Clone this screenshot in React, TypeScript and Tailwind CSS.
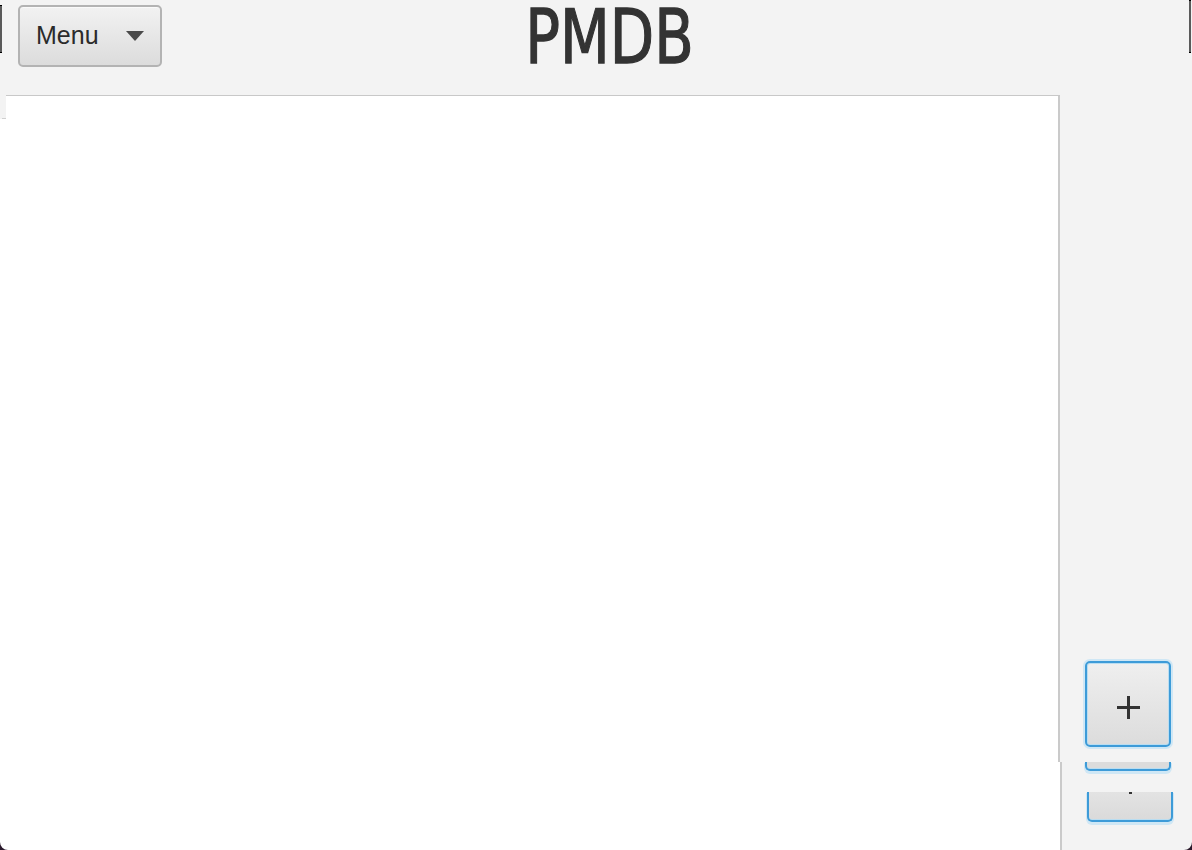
import React from "react";

function Corner({ flip }: { flip?: boolean }) {
    return (
        <svg
            width="8"
            height="8"
            viewBox="0 0 8 8"
            className={flip ? "absolute bottom-0 right-0" : "absolute bottom-0 left-0 -scale-x-100"}
        >
            <path d="M8 0 A8 8 0 0 1 0 8 L8 8 Z" fill="#2a1a2c" />
        </svg>
    );
}

export default function App() {
    return (
        <div className="relative w-[1192px] h-[850px] overflow-hidden bg-[#f3f3f3] flex flex-col font-['Liberation_Sans',Arial,sans-serif]">
            {/* header */}
            <header className="h-[95px] flex items-start shrink-0">
                <button className="mt-[5px] ml-[18px] w-[144px] h-[62px] flex items-center justify-between pl-[16px] pr-[16px] rounded-[5px] border-2 border-[#b3b3b3] bg-gradient-to-b from-[#f2f2f2] to-[#dcdcdc] shadow-[inset_0_1px_0_#fafafa] text-[25px] text-[#2b2b2b]">
                    <span>Menu</span>
                    <svg width="18" height="10" viewBox="0 0 18 10">
                        <path d="M0 0 H18 L9 10 Z" fill="#4a4a4a" />
                    </svg>
                </button>
                <h1 className="flex-1 text-center pr-[134px] leading-[75px] text-[75px] text-[#333333] font-['DejaVu_Sans',sans-serif] [-webkit-text-stroke:1.3px_#333333]">
                    <span className="inline-block scale-x-[0.77]">PMDB</span>
                </h1>
            </header>

            {/* body */}
            <div className="flex flex-1">
                <div className="w-[6px] flex flex-col">
                    <div className="h-[23px]" />
                    <div className="h-px ml-[2px] bg-[#d0d0d0]" />
                    <div className="flex-1 bg-white" />
                </div>
                <div className="w-[1054px] flex flex-col bg-white border-t border-[#c8c8c8]">
                    <div className="flex-1 border-r-2 border-[#cacaca]" />
                    <div className="h-[88px] -mr-[2px] border-r-2 border-[#cacaca]" />
                </div>
                <div className="flex-1 flex flex-col justify-end pb-[28px]">
                    <button className="ml-[25px] w-[86px] h-[86px] flex items-center justify-center pt-[7px] rounded-[5px] border-2 border-[#3d9bd8] bg-gradient-to-b from-[#efefef] to-[#dcdcdc] shadow-[0_0_0_2px_#cfe7f5,inset_0_0_0_1px_#b9ddf1]">
                        <svg width="23" height="23" viewBox="0 0 23 23">
                            <rect x="0" y="10" width="23" height="3" fill="#333" />
                            <rect x="10" y="0" width="3" height="23" fill="#333" />
                        </svg>
                    </button>
                    <div className="mt-[15px] ml-[25px] w-[86px] h-[9px] rounded-b-[5px] border-2 border-t-0 border-[#3d9bd8] bg-[#dcdcdc] shadow-[0_2px_0_1px_#cfe7f5,inset_0_-1px_0_#b9ddf1]" />
                    <div className="mt-[21px] ml-[27px] w-[86px] h-[30px] flex justify-center rounded-b-[5px] border-2 border-t-0 border-[#3d9bd8] bg-gradient-to-b from-[#e3e3e3] to-[#dadada] shadow-[0_2px_0_1px_#cfe7f5,inset_0_-1px_0_#b9ddf1]">
                        <div className="w-[3px] h-[2px] bg-[#333]" />
                    </div>
                </div>
            </div>

            {/* window edge artifacts */}
            <div className="absolute left-0 top-[5px] w-[2px] h-[48px] bg-[#5a5a5a] border-y border-black" />
            <div className="absolute right-[1px] top-0 w-[2px] h-[53px] bg-[#5a5a5a] border-y border-black" />
            <Corner />
            <Corner flip />
        </div>
    );
}
